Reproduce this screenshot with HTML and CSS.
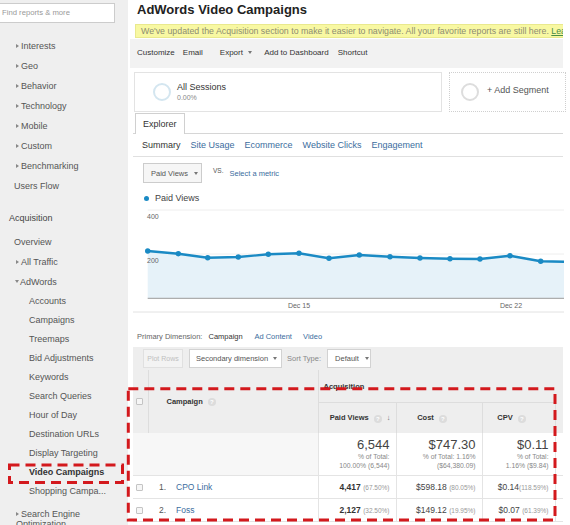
FILE: index.html
```html
<!DOCTYPE html>
<html lang="en">
<head>
    <meta charset="UTF-8">
    <meta name="viewport" content="width=device-width, initial-scale=1.0">
    <title>AdWords Video Campaigns</title>
    <link rel="stylesheet" href="styles.css">
</head>
<body>
    <div class="page">
        <aside class="sidebar">
            <div class="search">Find reports &amp; more</div>
            <ul class="nav">
                <li class="nav-item lvl2"><span class="caret"></span>Interests</li>
                <li class="nav-item lvl2"><span class="caret"></span>Geo</li>
                <li class="nav-item lvl2"><span class="caret"></span>Behavior</li>
                <li class="nav-item lvl2"><span class="caret"></span>Technology</li>
                <li class="nav-item lvl2"><span class="caret"></span>Mobile</li>
                <li class="nav-item lvl2"><span class="caret"></span>Custom</li>
                <li class="nav-item lvl2"><span class="caret"></span>Benchmarking</li>
                <li class="nav-item lvl2 plain">Users Flow</li>
                <li class="nav-item lvl1">Acquisition</li>
                <li class="nav-item lvl2 plain overview">Overview</li>
                <li class="nav-item lvl2"><span class="caret"></span>All Traffic</li>
                <li class="nav-item lvl2"><span class="caret open"></span>AdWords</li>
                <li class="nav-item lvl3">Accounts</li>
                <li class="nav-item lvl3">Campaigns</li>
                <li class="nav-item lvl3">Treemaps</li>
                <li class="nav-item lvl3">Bid Adjustments</li>
                <li class="nav-item lvl3">Keywords</li>
                <li class="nav-item lvl3">Search Queries</li>
                <li class="nav-item lvl3">Hour of Day</li>
                <li class="nav-item lvl3">Destination URLs</li>
                <li class="nav-item lvl3">Display Targeting</li>
                <li class="nav-item lvl3 active">Video Campaigns</li>
                <li class="nav-item lvl3">Shopping Campa...</li>
                <li class="nav-item lvl2 wrap"><span class="caret"></span>Search Engine<br>Optimization</li>
            </ul>
        </aside>

        <main class="main">
            <h1 class="title">AdWords Video Campaigns</h1>
            <div class="notice">We've updated the Acquisition section to make it easier to navigate. All your favorite reports are still here. <a href="#">Learn more</a></div>

            <div class="actions">
                <span>Customize</span>
                <span>Email</span>
                <span>Export <span class="dd"></span></span>
                <span>Add to Dashboard</span>
                <span>Shortcut</span>
            </div>

            <div class="segments">
                <div class="segment">
                    <span class="ring"></span>
                    <div>
                        <div class="seg-name">All Sessions</div>
                        <div class="seg-pct">0.00%</div>
                    </div>
                </div>
                <div class="segment add">
                    <span class="ring grey"></span>
                    <span class="seg-add">+ Add Segment</span>
                </div>
            </div>

            <div class="tabs"><span class="tab">Explorer</span></div>
            <div class="subtabs">
                <span class="current">Summary</span>
                <a href="#">Site Usage</a>
                <a href="#">Ecommerce</a>
                <a href="#">Website Clicks</a>
                <a href="#">Engagement</a>
            </div>

            <div class="metric-row">
                <span class="select metric-select">Paid Views <span class="dd"></span></span>
                <span class="vs">VS.</span>
                <a href="#" class="metric-link">Select a metric</a>
            </div>

            <div class="legend"><span class="dot"></span>Paid Views</div>

            <svg class="chart" width="437" height="110" viewBox="0 0 437 110">
                <line x1="14.7" y1="4" x2="431" y2="4" stroke="#eeeeee" stroke-width="1"/>
                <line x1="14.7" y1="48" x2="431" y2="48" stroke="#eeeeee" stroke-width="1"/>
                <polygon fill="#e6f2f9" points="14.7,45 45.3,47.7 74.7,51.7 105.3,51 135.3,48.3 166,47.3 196,52.3 226.3,49 257,50.7 287,52 317,52.7 347,53 377,49.7 407.7,55.3 431,55.7 431,92.3 14.7,92.3"/>
                <line x1="14.7" y1="92.3" x2="431" y2="92.3" stroke="#9a9a9a" stroke-width="1"/>
                <polyline fill="none" stroke="#1a8ac4" stroke-width="2.4" stroke-linejoin="round" points="14.7,45 45.3,47.7 74.7,51.7 105.3,51 135.3,48.3 166,47.3 196,52.3 226.3,49 257,50.7 287,52 317,52.7 347,53 377,49.7 407.7,55.3 431,55.7"/>
                <g fill="#1a8ac4">
                    <circle cx="14.7" cy="45" r="2.7"/>
                    <circle cx="45.3" cy="47.7" r="2.7"/>
                    <circle cx="74.7" cy="51.7" r="2.7"/>
                    <circle cx="105.3" cy="51" r="2.7"/>
                    <circle cx="135.3" cy="48.3" r="2.7"/>
                    <circle cx="166" cy="47.3" r="2.7"/>
                    <circle cx="196" cy="52.3" r="2.7"/>
                    <circle cx="226.3" cy="49" r="2.7"/>
                    <circle cx="257" cy="50.7" r="2.7"/>
                    <circle cx="287" cy="52" r="2.7"/>
                    <circle cx="317" cy="52.7" r="2.7"/>
                    <circle cx="347" cy="53" r="2.7"/>
                    <circle cx="377" cy="49.7" r="2.7"/>
                    <circle cx="407.7" cy="55.3" r="2.7"/>
                </g>
                <g class="axis">
                    <text x="14" y="12.5">400</text>
                    <text x="14" y="56.5">200</text>
                    <text x="166" y="101.5" text-anchor="middle">Dec 15</text>
                    <text x="378" y="101.5" text-anchor="middle">Dec 22</text>
                </g>
                <line x1="0" y1="106" x2="431" y2="106" stroke="#e2e2e2" stroke-width="1"/>
            </svg>

            <div class="dimension">
                <span class="dim-label">Primary Dimension:</span>
                <span class="dim-current">Campaign</span>
                <a href="#">Ad Content</a>
                <a href="#">Video</a>
            </div>

            <div class="table-tools">
                <span class="btn disabled">Plot Rows</span>
                <span class="btn secondary">Secondary dimension <span class="dd"></span></span>
                <span class="sort-label">Sort Type:</span>
                <span class="btn sort">Default <span class="dd"></span></span>
            </div>

            <table class="report">
                <colgroup>
                    <col class="c-check">
                    <col class="c-name">
                    <col class="c-views">
                    <col class="c-cost">
                    <col class="c-cpv">
                    <col class="c-more">
                </colgroup>
                <thead>
                    <tr class="group-row">
                        <th rowspan="2" class="check-cell head-check"><span class="box"></span></th>
                        <th rowspan="2" class="name-head">Campaign<span class="help">?</span></th>
                        <th colspan="3" class="group">Acquisition</th>
                        <th rowspan="2" class="more"></th>
                    </tr>
                    <tr class="metric-head">
                        <th class="num-head sorted">Paid Views<span class="help">?</span><span class="sort-arrow">&#8595;</span></th>
                        <th class="num-head">Cost<span class="help">?</span></th>
                        <th class="num-head">CPV<span class="help">?</span></th>
                    </tr>
                </thead>
                <tbody>
                    <tr class="totals">
                        <td class="check-cell"></td>
                        <td class="name"></td>
                        <td class="num"><div class="big">6,544</div><div class="small">% of Total:<br>100.00% (6,544)</div></td>
                        <td class="num"><div class="big">$747.30</div><div class="small">% of Total: 1.16%<br>($64,380.09)</div></td>
                        <td class="num"><div class="big">$0.11</div><div class="small">% of Total:<br>1.16% ($9.84)</div></td>
                        <td class="more"></td>
                    </tr>
                    <tr class="row">
                        <td class="check-cell"><span class="box"></span></td>
                        <td class="name"><span class="idx">1.</span><a href="#">CPO Link</a></td>
                        <td class="num"><b>4,417</b> <span class="pct">(67.50%)</span></td>
                        <td class="num">$598.18 <span class="pct">(80.05%)</span></td>
                        <td class="num">$0.14<span class="pct">(118.59%)</span></td>
                        <td class="more"></td>
                    </tr>
                    <tr class="row">
                        <td class="check-cell"><span class="box"></span></td>
                        <td class="name"><span class="idx">2.</span><a href="#">Foss</a></td>
                        <td class="num"><b>2,127</b> <span class="pct">(32.50%)</span></td>
                        <td class="num">$149.12 <span class="pct">(19.95%)</span></td>
                        <td class="num">$0.07 <span class="pct">(61.39%)</span></td>
                        <td class="more"></td>
                    </tr>
                </tbody>
            </table>
        </main>
    </div>

    <!-- annotation marks drawn over the screenshot -->
    <svg class="marks" width="570" height="525" viewBox="0 0 570 525">
        <rect x="9.5" y="465" width="113" height="17.5" fill="none" stroke="#d3191d" stroke-width="3" stroke-dasharray="10 6"/>
        <rect x="128.3" y="388.7" width="426.7" height="131.3" fill="none" stroke="#d3191d" stroke-width="3" stroke-dasharray="10 6"/>
    </svg>
</body>
</html>
```

FILE: styles.css
```css
body {
    margin: 0;
    width: 570px;
    height: 525px;
    overflow: hidden;
    position: relative;
    font-family: "Liberation Sans", Arial, sans-serif;
    background-color: #ffffff;
    color: #333333;
}

a {
    color: #3b6d9e;
    text-decoration: none;
}

.page {
    display: flex;
    height: 525px;
}

/* sidebar */

.sidebar {
    width: 128px;
    flex: none;
    background-color: #efefef;
}

.search {
    margin-top: 3px;
    width: 115px;
    height: 20px;
    box-sizing: border-box;
    background-color: #ffffff;
    border: 1px solid #cccccc;
    border-left: none;
    padding-left: 2px;
    font-size: 7.7px;
    line-height: 18px;
    color: #999999;
}

.nav {
    list-style: none;
    margin: 0;
    padding: 13px 0 0 0;
}

.nav-item {
    height: 20px;
    line-height: 20px;
    font-size: 9px;
    color: #555555;
    white-space: nowrap;
}

.lvl1 {
    padding-left: 9px;
    margin-top: 12px;
    color: #444444;
}

.lvl2 {
    padding-left: 16px;
}

.lvl2.plain {
    padding-left: 14px;
}

.overview {
    margin-top: 4px;
}

.lvl3 {
    padding-left: 29px;
    height: 19px;
    line-height: 19px;
}

.active {
    font-weight: bold;
    color: #333333;
}

.wrap {
    height: auto;
    line-height: 10px;
    margin-top: 8px;
}

.caret {
    display: inline-block;
    width: 0;
    height: 0;
    border-left: 3px solid #888888;
    border-top: 2.5px solid transparent;
    border-bottom: 2.5px solid transparent;
    margin-right: 2px;
    vertical-align: 1px;
}

.caret.open {
    border-left: 2.5px solid transparent;
    border-right: 2.5px solid transparent;
    border-top: 3px solid #888888;
    border-bottom: none;
    margin-left: -1px;
    margin-right: 1px;
    vertical-align: 2px;
}

/* main column */

.main {
    flex: 1;
    min-width: 0;
    overflow: hidden;
    padding-left: 5px;
}

.title {
    margin: 2px 0 0 4px;
    font-size: 13px;
    line-height: 16px;
    font-weight: bold;
    color: #222222;
}

.notice {
    margin: 6px 7px 0 2px;
    height: 14px;
    box-sizing: border-box;
    background-color: #f8f8a2;
    border: 1px solid #e9e98e;
    border-right: none;
    padding-left: 5px;
    font-size: 8.8px;
    line-height: 12px;
    color: #8d8d72;
    white-space: nowrap;
    overflow: hidden;
}

.notice a {
    color: #4a8d45;
    text-decoration: underline;
}

.dd {
    display: inline-block;
    width: 0;
    height: 0;
    border-left: 2.5px solid transparent;
    border-right: 2.5px solid transparent;
    border-top: 3px solid #777777;
    margin-left: 3px;
    vertical-align: 1px;
}

.actions {
    margin: 1px 7px 0 -3px;
    height: 29px;
    background-color: #f2f2f2;
    display: flex;
    align-items: center;
    padding-left: 7px;
    padding-bottom: 2px;
    box-sizing: border-box;
    font-size: 8px;
    color: #333333;
}

.actions > span {
    margin-right: 12px;
}

.actions > span:nth-child(1) {
    margin-right: 8px;
}

.actions > span:nth-child(2) {
    margin-right: 17px;
}

.actions > span:nth-child(4) {
    margin-right: 9px;
}

.segments {
    display: flex;
    gap: 7px;
    margin: 4px 0 0 1px;
    height: 40px;
}

.segment {
    width: 308px;
    flex: none;
    box-sizing: border-box;
    border: 1px solid #e3e3e3;
    display: flex;
    align-items: center;
    padding-left: 18px;
}

.segment.add {
    width: 117px;
    border: 1px dotted #cfcfcf;
    padding-left: 11px;
}

.ring {
    width: 18px;
    height: 18px;
    box-sizing: border-box;
    border: 2.5px solid #d4e6f0;
    border-radius: 50%;
    margin-right: 6px;
    flex: none;
}

.ring.grey {
    border-color: #dddddd;
    margin-right: 8px;
}

.seg-name {
    font-size: 9px;
    line-height: 11px;
    color: #333333;
}

.seg-pct {
    font-size: 7px;
    line-height: 9px;
    color: #888888;
}

.seg-add {
    font-size: 9px;
    color: #555555;
    margin-bottom: 5px;
}

.tabs {
    margin: 1px 7px 0 0;
    height: 21px;
    box-sizing: border-box;
    border-bottom: 1px solid #d6d6d6;
}

.tab {
    display: inline-block;
    margin-left: 2px;
    height: 21px;
    box-sizing: border-box;
    padding: 0 7px;
    border: 1px solid #d0d0d0;
    border-bottom: none;
    background-color: #ffffff;
    font-size: 9px;
    line-height: 20px;
    color: #333333;
}

.subtabs {
    display: flex;
    gap: 10px;
    height: 22px;
    line-height: 22px;
    margin-right: 7px;
    padding-left: 9px;
    border-bottom: 1px solid #e0e0e0;
    font-size: 9px;
}

.subtabs .current {
    color: #333333;
}

.metric-row {
    display: flex;
    align-items: flex-start;
    margin-top: 6px;
    height: 20px;
}

.select {
    display: inline-flex;
    align-items: center;
    box-sizing: border-box;
    height: 20px;
    border: 1px solid #cccccc;
    font-size: 7.5px;
    color: #555555;
}

.metric-select {
    margin-left: 10px;
    width: 59px;
    padding-left: 7px;
    background-color: #f6f6f6;
}

.metric-select .dd {
    margin-left: 6px;
}

.vs {
    margin: 4px 0 0 11px;
    font-size: 6.5px;
    color: #555555;
}

.metric-link {
    margin: 6px 0 0 6px;
    font-size: 7.5px;
}

.legend {
    margin-top: 7px;
    height: 16px;
    display: flex;
    align-items: center;
    padding-left: 11px;
    font-size: 9px;
    color: #444444;
}

.dot {
    width: 5px;
    height: 5px;
    border-radius: 50%;
    background-color: #1a8ac4;
    margin-right: 6px;
}

.chart {
    display: block;
}

.axis text {
    font-family: "Liberation Sans", Arial, sans-serif;
    font-size: 7px;
    fill: #666666;
}

.dimension {
    margin-top: 10px;
    height: 21px;
    line-height: 21px;
    padding-left: 4px;
    font-size: 7.5px;
}

.dim-label {
    color: #666666;
}

.dim-current {
    color: #333333;
    margin: 0 10px 0 4px;
}

.dimension a {
    margin-right: 9px;
}

.table-tools {
    width: 430px;
    height: 23px;
    box-sizing: border-box;
    display: flex;
    align-items: center;
    padding-left: 10px;
    background-color: #eeeeee;
    font-size: 7.5px;
    white-space: nowrap;
}

.btn {
    display: inline-flex;
    align-items: center;
    flex: none;
    height: 19px;
    box-sizing: border-box;
    border: 1px solid #d2d2d2;
    background-color: #ffffff;
    color: #555555;
    padding: 0 3px 0 6px;
    white-space: nowrap;
}

.btn.disabled {
    width: 40px;
    justify-content: center;
    padding: 0;
    font-size: 7px;
    background-color: #f3f3f3;
    border-color: #e0e0e0;
    color: #c0c0c0;
}

.btn.secondary {
    margin-left: 6px;
    width: 93px;
}

.btn.secondary .dd {
    margin-left: 5px;
}

.sort-label {
    margin-left: 5px;
    color: #888888;
}

.btn.sort {
    margin-left: 6px;
    width: 44px;
    padding-left: 7px;
}

.btn.sort .dd {
    margin-left: 6px;
}

/* report table */

.report {
    width: 430px;
    table-layout: fixed;
    border-collapse: collapse;
    font-size: 8.5px;
}

.c-check { width: 15px; }
.c-name { width: 170px; }
.c-views { width: 78px; }
.c-cost { width: 86px; }
.c-cpv { width: 73px; }
.c-more { width: 8px; }

.report th {
    background-color: #eeeeee;
    font-size: 7.5px;
    font-weight: bold;
    color: #333333;
    padding: 0;
}

.group-row th {
    height: 32px;
}

.metric-head th {
    height: 30px;
}

.head-check {
    border-right: 1px solid #dddddd;
}

.name-head {
    text-align: left;
    padding-left: 18px !important;
    border-right: 1px solid #dddddd;
}

.group {
    text-align: left;
    padding-left: 5px !important;
    border-bottom: 1px solid #dddddd;
}

.num-head {
    text-align: center;
    padding-right: 14px !important;
    border-left: 1px solid #dddddd;
    border-right: 1px solid #dddddd;
}

.num-head.sorted {
    text-align: right;
    padding-right: 5px !important;
}

.help {
    display: inline-block;
    width: 8px;
    height: 8px;
    border-radius: 50%;
    background-color: #dcdcdc;
    color: #ffffff;
    font-size: 6px;
    line-height: 8px;
    text-align: center;
    margin-left: 5px;
    vertical-align: middle;
}

.sort-arrow {
    margin-left: 5px;
    color: #777777;
    font-weight: normal;
}

.report td {
    padding: 0;
    border-bottom: 1px solid #e4e4e4;
}

.check-cell {
    padding-left: 3px !important;
}

.box {
    display: block;
    width: 7px;
    height: 7px;
    box-sizing: border-box;
    border: 1px solid #c4c4c4;
    border-radius: 1px;
    background-color: #f6f6f6;
}

.totals td {
    height: 42px;
    vertical-align: top;
}

.totals .check-cell,
.totals .name {
    background-color: #f7f7f7;
}

.num {
    text-align: right;
    padding-right: 6px !important;
    border-left: 1px solid #e4e4e4;
    border-right: 1px solid #e4e4e4;
    color: #444444;
    white-space: nowrap;
}

.big {
    margin-top: 5px;
    font-size: 13px;
    line-height: 14px;
    color: #444444;
}

.small {
    font-size: 6.8px;
    line-height: 9px;
    color: #888888;
}

.row td {
    height: 22px;
}

.row b {
    color: #333333;
}

.name {
    padding-left: 11px !important;
    white-space: nowrap;
}

.idx {
    display: inline-block;
    width: 17px;
    color: #555555;
}

.pct {
    font-size: 6.5px;
    color: #999999;
}

/* annotation overlay */

.marks {
    position: absolute;
    top: 0;
    left: 0;
    pointer-events: none;
}
```
